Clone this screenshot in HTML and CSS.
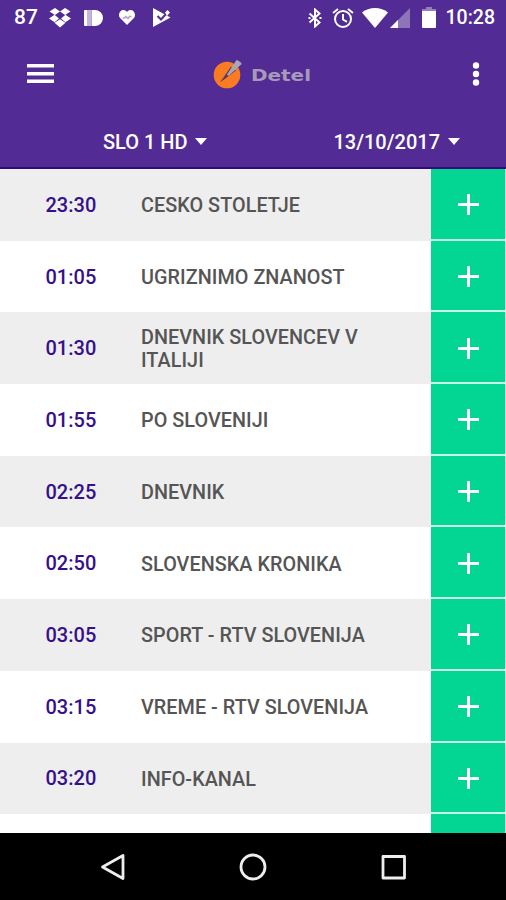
FILE: index.html
```html
<!DOCTYPE html>
<html lang="sl">
<head>
  <meta charset="UTF-8">
  <title>Detel</title>
  <meta name="viewport" content="width=device-width, initial-scale=1.0">
  <link rel="stylesheet" href="styles.css">
</head>
<body>
  <div class="screen">
    <header class="header">
      <div class="status-bar">
        <div class="status-left">
          <span class="status-text">87</span>
          <svg class="ic-dropbox" width="22" height="20" viewBox="0 0 22 20" fill="#fff">
            <path d="M6 0 11 3.400 6 7 .5 3.400z M16 0 21.500 3.400 16 7 11 3.400z M5.500 6.800 10 10.600 5.500 14.200 0 10.600z M16.500 6.800 22 10.600 16.500 14.200 12 10.600z M5.500 14.800 11 11.200 16.500 14.800 11 19.500z"/>
          </svg>
          <svg class="ic-pushbullet" width="19" height="16" viewBox="0 0 19 16">
            <path fill="#fff" d="M1 0h2v16H1a1 1 0 0 1-1-1V1a1 1 0 0 1 1-1z M7.500 0H11a8 8 0 0 1 0 16H7.500z"/>
            <path fill="#c3b5dc" d="M3 0h4.500v16H3z"/>
          </svg>
          <svg class="ic-heart" width="16" height="15" viewBox="0 0 16 15">
            <path fill="#fff" d="M8 15 1.300 8.300A4.400 4.400 0 0 1 0 5C0 2 2 0 4.400 0 6 0 7.300.8 8 2.100 8.700.8 10 0 11.600 0 14 0 16 2 16 5c0 1.300-.5 2.400-1.300 3.300z"/>
            <path fill="none" stroke="#b3a0d0" stroke-width="1.500" d="M3.500 8h2l1.500-1.500L9 8.500l1.500-2h2"/>
          </svg>
          <svg class="ic-play" width="19" height="19" viewBox="0 0 19 19">
            <path fill="#fff" d="M1 0 18.500 9.500 1 19z"/>
            <path fill="none" stroke="#522b94" stroke-width="2" d="M5.500 8 9 11.500l5-5.500"/>
            <path fill="#fff" d="M13 4.500 15.500 2 18 4.500 15 8z"/>
          </svg>
        </div>
        <div class="status-right">
          <svg class="ic-bluetooth" width="14" height="20" viewBox="0 0 14 20" fill="none" stroke="#fff" stroke-width="2">
            <path d="M1.500 5.500 11.500 14.500 7 18.500V1.500l4.500 4L1.500 14.500"/>
            <path d="M.5 10h2M11.500 10h2"/>
          </svg>
          <svg class="ic-alarm" width="22" height="20" viewBox="0 0 22 20" fill="none" stroke="#fff" stroke-width="2">
            <circle cx="11" cy="11" r="8"/>
            <path d="M1 5 6 1M21 5 16 1M11 6v5.500l4 2.300"/>
          </svg>
          <svg class="ic-wifi" width="26" height="20" viewBox="0 0 26 20" fill="#fff">
            <path d="M13 20 0 4.500C3.500 1.500 8 0 13 0s9.500 1.500 13 4.500z"/>
          </svg>
          <svg class="ic-signal" width="20" height="20" viewBox="0 0 20 20" fill="#fff">
            <path d="M20 0v20H0z" opacity=".35"/>
            <path d="M8 12v8H0z"/>
          </svg>
          <svg class="ic-battery" width="14" height="21" viewBox="0 0 14 21" fill="#fff">
            <path d="M4 0h6v2h4v2H0V2h4z" opacity=".4"/>
            <path d="M0 4h14v16a1 1 0 0 1-1 1H1a1 1 0 0 1-1-1z"/>
          </svg>
          <span class="status-text">10:28</span>
        </div>
      </div>

      <div class="app-bar">
        <svg class="menu-icon" width="27" height="20" viewBox="0 0 27 20" fill="#fff">
          <path d="M0 0h27v3.500H0zM0 8h27v3.500H0zM0 15.500h27v3.500H0z"/>
        </svg>
        <svg class="logo" width="100" height="32" viewBox="0 0 100 32">
          <circle cx="14" cy="17" r="13.300" fill="#fa7b22"/>
          <path d="M7 24.500 18 8.500l5 4z" fill="#5a3a5c"/>
          <path d="M14 16.500 23.500 2c2 .5 4.200 2 5.200 4L15.500 18z" fill="#aaa7b0"/>
          <text class="logo-text" x="38" y="22.500" textLength="60" lengthAdjust="spacingAndGlyphs">Detel</text>
        </svg>
        <svg class="more-icon" width="8" height="24" viewBox="0 0 8 24" fill="#fff">
          <circle cx="4" cy="3.500" r="3.200"/>
          <circle cx="4" cy="12" r="3.200"/>
          <circle cx="4" cy="20.500" r="3.200"/>
        </svg>
      </div>

      <div class="filter-row">
        <div class="filter channel">SLO 1 HD<span class="caret"></span></div>
        <div class="filter date">13/10/2017<span class="caret"></span></div>
      </div>
    </header>

    <main class="list">
      <div class="row"><span class="time">23:30</span><span class="title">CESKO STOLETJE</span><button class="add-btn"></button></div>
      <div class="row"><span class="time">01:05</span><span class="title">UGRIZNIMO ZNANOST</span><button class="add-btn"></button></div>
      <div class="row"><span class="time">01:30</span><span class="title">DNEVNIK SLOVENCEV V ITALIJI</span><button class="add-btn"></button></div>
      <div class="row"><span class="time">01:55</span><span class="title">PO SLOVENIJI</span><button class="add-btn"></button></div>
      <div class="row"><span class="time">02:25</span><span class="title">DNEVNIK</span><button class="add-btn"></button></div>
      <div class="row"><span class="time">02:50</span><span class="title">SLOVENSKA KRONIKA</span><button class="add-btn"></button></div>
      <div class="row"><span class="time">03:05</span><span class="title">SPORT - RTV SLOVENIJA</span><button class="add-btn"></button></div>
      <div class="row"><span class="time">03:15</span><span class="title">VREME - RTV SLOVENIJA</span><button class="add-btn"></button></div>
      <div class="row"><span class="time">03:20</span><span class="title">INFO-KANAL</span><button class="add-btn"></button></div>
      <div class="row"><span class="time"></span><span class="title"></span><button class="add-btn"></button></div>
    </main>

    <nav class="nav-bar">
      <svg width="28" height="30" viewBox="0 0 28 30" fill="none" stroke="#eee" stroke-width="2.800" stroke-linejoin="round">
        <path d="M24 3.500v23L3.500 15z"/>
      </svg>
      <svg width="28" height="30" viewBox="0 0 28 30" fill="none" stroke="#eee" stroke-width="2.800">
        <circle cx="14" cy="15" r="12"/>
      </svg>
      <svg width="28" height="30" viewBox="0 0 28 30" fill="none" stroke="#eee" stroke-width="2.800" stroke-linejoin="round">
        <path d="M4 4.500h21.500v21.500H4z"/>
      </svg>
    </nav>
  </div>
</body>
</html>
```
FILE: styles.css
```css
html, body {
  height: 100%;
  margin: 0;
  padding: 0;
  overflow: hidden;
  font-family: Roboto, "Liberation Sans", sans-serif;
}
.screen {
  display: flex;
  flex-direction: column;
  height: 900px;
  width: 506px;
  background: #fff;
}
svg {
  display: block;
  flex: none;
}
.header {
  flex: none;
  height: 169px;
  box-sizing: border-box;
  background: #522b94;
  border-bottom: 2px solid #2f0a7c;
  color: #fff;
}
.status-bar {
  display: flex;
  justify-content: space-between;
  align-items: center;
  height: 35px;
  padding: 0 11px 0 14px;
}
.status-left, .status-right {
  display: flex;
  align-items: center;
}
.status-text {
  font-size: 19.5px;
  font-weight: 500;
  line-height: 37px;
}
.status-left .status-text {
  font-size: 21px;
  line-height: 35px;
}
.ic-dropbox { margin-left: 11px; }
.ic-pushbullet { margin-left: 13px; }
.ic-heart { margin-left: 16px; }
.ic-play { margin-left: 17px; }
.ic-alarm { margin-left: 10px; }
.ic-wifi { margin-left: 8px; }
.ic-signal { margin-left: 2px; }
.ic-battery { margin-left: 12px; margin-right: 10px; }
.app-bar {
  display: flex;
  align-items: center;
  justify-content: space-between;
  height: 77px;
  padding: 0 26px 0 27px;
}
.logo { margin-right: 1px; }
.logo-text {
  font-family: "DejaVu Sans", sans-serif;
  font-size: 16px;
  font-weight: bold;
  fill: #a79bb9;
}
.filter-row {
  display: flex;
  justify-content: space-between;
  height: 55px;
  padding: 0 46px 0 103px;
}
.filter {
  display: flex;
  align-items: center;
  gap: 8px;
  height: 60px;
  font-size: 20px;
  font-weight: 500;
}
.channel { gap: 7px; }
.caret {
  margin-bottom: 1px;
  border-left: 6.5px solid transparent;
  border-right: 6.5px solid transparent;
  border-top: 7px solid #fff;
}
.list {
  flex: 1;
  min-height: 0;
  overflow: hidden;
}
.row {
  display: flex;
  align-items: center;
  height: 71.7px;
  background: #fff;
}
.row:nth-child(odd) { background: #eee; }
.row:last-child { background: #fff; }
.time {
  flex: none;
  width: 95.5px;
  padding-left: 45.5px;
  font-size: 20px;
  font-weight: 500;
  color: #35108a;
}
.title {
  flex: 1;
  padding: 2px 50px 0 0;
  font-size: 19.8px;
  line-height: 23px;
  letter-spacing: 0.05px;
  font-weight: 500;
  color: #555;
}
.add-btn {
  flex: none;
  align-self: stretch;
  display: flex;
  align-items: center;
  justify-content: center;
  width: 75px;
  padding: 2px 0 0;
  border: 0;
  border-right: 1px solid #c3f3df;
  border-bottom: 2px solid #c9f5e5;
  background: #03d693;
}
/* plus sign */
.add-btn::before {
  content: "";
  width: 21px;
  height: 21px;
  background:
    linear-gradient(#fff, #fff) center / 21px 3px no-repeat,
    linear-gradient(#fff, #fff) center / 3px 21px no-repeat;
}
.nav-bar {
  flex: none;
  display: flex;
  align-items: center;
  justify-content: space-between;
  height: 67px;
  box-sizing: border-box;
  padding: 0 99px;
  background: #000;
}
```
